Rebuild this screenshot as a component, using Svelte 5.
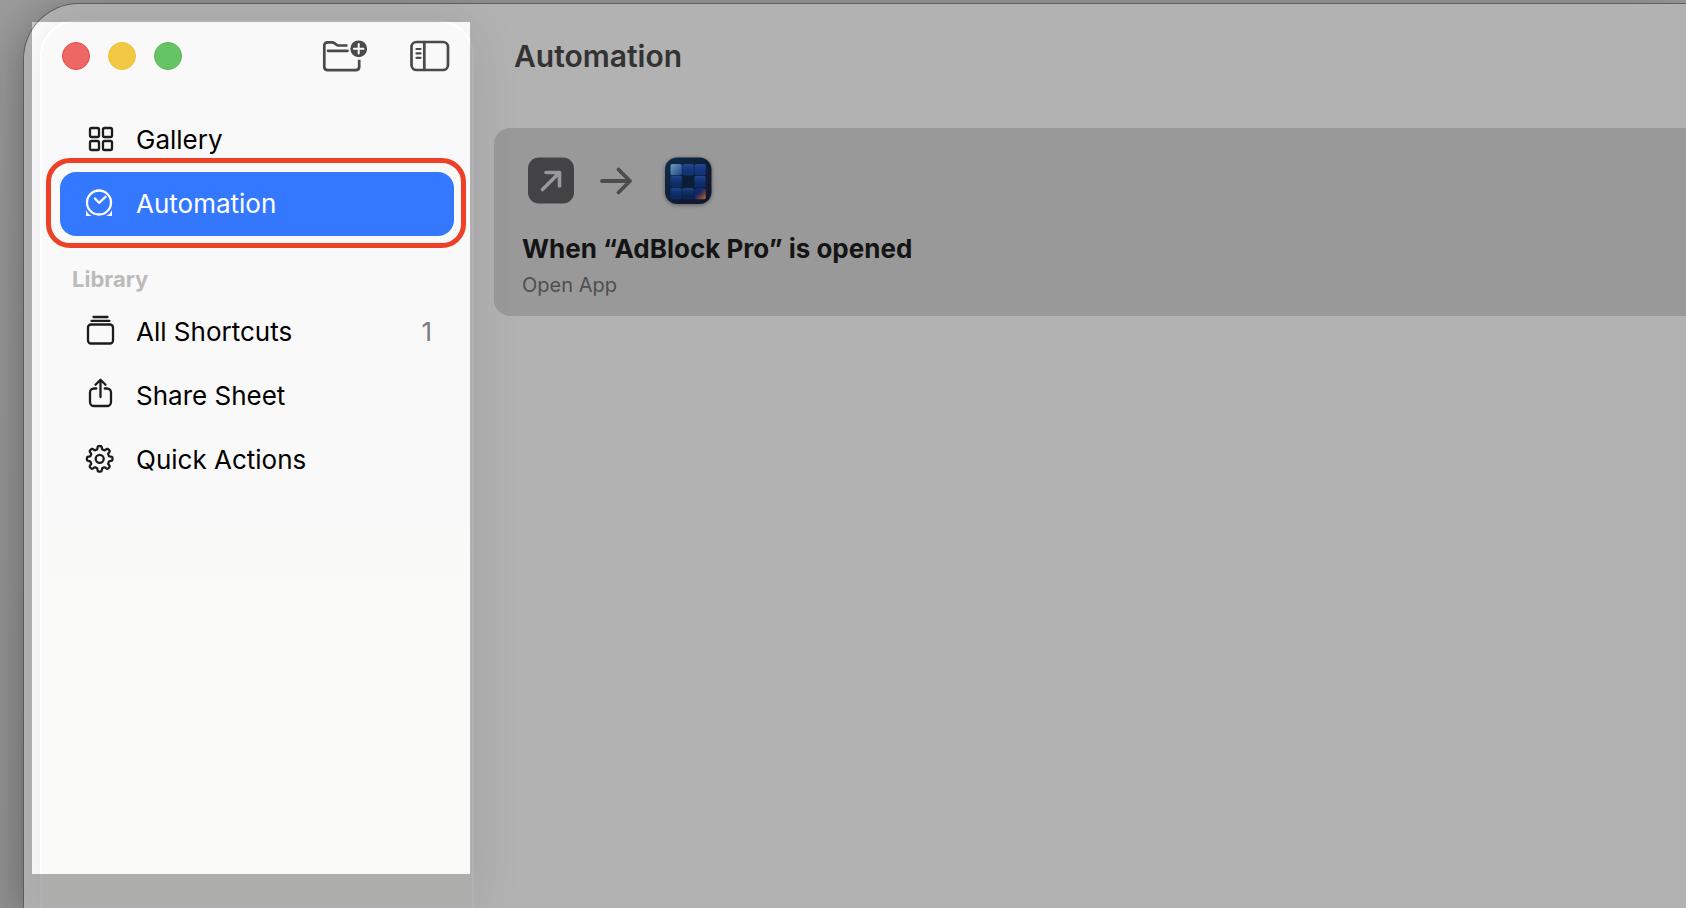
<script>
  const library = [
    { id: 'all', label: 'All Shortcuts', count: 1 },
    { id: 'share', label: 'Share Sheet' },
    { id: 'quick', label: 'Quick Actions' }
  ];

  // Outline of an eight-toothed cog with softened teeth.
  function cog(cx, cy) {
    const points = [];
    for (let i = 0; i < 160; i++) {
      const t = (i / 160) * Math.PI * 2;
      const r = 11.2 + 1.6 * Math.tanh(2.6 * Math.cos(8 * t));
      points.push(`${(cx + r * Math.sin(t)).toFixed(2)} ${(cy - r * Math.cos(t)).toFixed(2)}`);
    }
    return `M${points.join('L')}Z`;
  }

  const tiles = [
    'url(#tile-light)', '#1c48a4', '#1b45a6',
    '#123c86', '#11294f', '#123a8e',
    '#10377e', '#0d3268', 'url(#tile-warm)'
  ];
</script>

{#snippet icon(id)}
  <svg class="icon" viewBox="0 0 32 32" aria-hidden="true">
    {#if id === 'gallery'}
      <rect x="6" y="4" width="9" height="9" rx="1.6" />
      <rect x="19" y="4" width="9" height="9" rx="1.6" />
      <rect x="6" y="17" width="9" height="9" rx="1.6" />
      <rect x="19" y="17" width="9" height="9" rx="1.6" />
    {:else if id === 'automation'}
      <circle cx="15" cy="14.500" r="12" />
      <path d="M11 10.500l4 4.300 6.500-6" />
      <path class="solid" d="M2 22V28h6C5.200 26.800 3.200 25 2 22zM28 22V28h-6c2.800-1.200 4.800-3 6-6z" />
    {:else if id === 'all'}
      <rect x="4" y="8.500" width="25" height="19" rx="3" />
      <path d="M9.500 1h14M7.500 4.800h18" />
    {:else if id === 'share'}
      <path d="M12.300 8.500H10a4 4 0 0 0-4 4V22a4 4 0 0 0 4 4h13a4 4 0 0 0 4-4v-9.500a4 4 0 0 0-4-4h-2.300" />
      <path d="M16.500 17V0M11.500 4.700l5-5 5 5" />
    {:else}
      <path d={cog(15.7, 14.8)} />
      <circle cx="15.700" cy="14.800" r="4" />
    {/if}
  </svg>
{/snippet}

<div class="desktop">
  <div class="window">
    <aside class="sidebar">
      <div class="toolbar">
        <div class="lights">
          <button class="light close" aria-label="Close"></button>
          <button class="light minimise" aria-label="Minimise"></button>
          <button class="light zoom" aria-label="Zoom"></button>
        </div>
        <div class="tools">
          <button class="tool" aria-label="New Folder">
            <svg width="46" height="34" viewBox="0 0 46 34" fill="none" stroke="#4a4a4a" stroke-width="2.700" stroke-linecap="round" stroke-linejoin="round">
              <path d="M25.500 6.500H16.500c-1 0-1.600-.3-2.300-.9l-1.700-1.400c-.7-.6-1.400-.9-2.400-.9H5.700C3.500 3.300 2.300 4.500 2.300 6.800v21c0 2.300 1.200 3.400 3.400 3.400h28c2.300 0 3.500-1.200 3.500-3.400v-7" stroke-linecap="butt" />
              <path d="M6 11.800h19.500" />
              <circle cx="36.700" cy="9.800" r="8.400" fill="#4a4a4a" stroke="none" />
              <path d="M36.700 5v9.600M31.900 9.800h9.600" stroke="#f9f9f9" stroke-width="2" />
            </svg>
          </button>
          <button class="tool" aria-label="Hide Sidebar">
            <svg width="40" height="34" viewBox="0 0 40 34" fill="none" stroke="#4a4a4a" stroke-width="2.700" stroke-linecap="round">
              <rect x="1.500" y="3" width="36.500" height="28" rx="5" />
              <path d="M14.300 3v28" />
              <path d="M6.500 10h4M6.500 14.400h4M6.500 18.800h4" stroke-width="2.200" />
            </svg>
          </button>
        </div>
      </div>

      <nav>
        <button class="item">{@render icon('gallery')}<span>Gallery</span></button>
        <button class="item active" aria-current="page">{@render icon('automation')}<span>Automation</span></button>
        <h2>Library</h2>
        {#each library as entry}
          <button class="item">
            {@render icon(entry.id)}<span>{entry.label}</span>
            {#if entry.count}<span class="count">{entry.count}</span>{/if}
          </button>
        {/each}
      </nav>
    </aside>

    <main>
      <h1>Automation</h1>
      <button class="card">
        <span class="flow">
          <svg width="48" height="48" viewBox="0 0 48 48" aria-hidden="true">
            <rect y="1.500" width="46" height="46" rx="11" fill="#616164" />
            <path d="M14.500 33.500L31 17M18 16.500h13.500V30" fill="none" stroke="#dbdbdb" stroke-width="3.600" stroke-linecap="round" stroke-linejoin="round" />
          </svg>
          <svg width="34" height="48" viewBox="0 0 34 48" aria-hidden="true">
            <path d="M2 25h28M18.500 13.500L30 25 18.500 36.500" fill="none" stroke="#6e6e6e" stroke-width="3.800" stroke-linecap="round" stroke-linejoin="round" />
          </svg>
          <svg class="app" width="48" height="48" viewBox="0 0 48 48" aria-hidden="true">
            <defs>
              <linearGradient id="body" x1="0" y1="0" x2="1" y2="1">
                <stop offset="0" stop-color="#15406e" />
                <stop offset=".5" stop-color="#152c50" />
                <stop offset="1" stop-color="#1f1f3c" />
              </linearGradient>
              <linearGradient id="tile-light" x1="0" y1="0" x2="1" y2="1">
                <stop offset="0" stop-color="#a0e4ff" />
                <stop offset="1" stop-color="#2463cc" />
              </linearGradient>
              <linearGradient id="tile-warm" x1="0" y1="0" x2="1" y2="1">
                <stop offset=".4" stop-color="#1b3a96" />
                <stop offset=".65" stop-color="#8a5565" />
                <stop offset="1" stop-color="#f5a850" />
              </linearGradient>
              <linearGradient id="gloss" x1="0" y1="0" x2="0" y2="1">
                <stop offset="0" stop-color="#4c92ff" stop-opacity=".5" />
                <stop offset=".7" stop-color="#2058d8" stop-opacity=".15" />
              </linearGradient>
            </defs>
            <rect x="1" y="1.500" width="46.500" height="46.500" rx="12" fill="url(#body)" />
            {#each tiles as fill, i}
              <rect x={6.5 + (i % 3) * 12} y={8 + Math.floor(i / 3) * 12} width="11.300" height="11.300" rx="1.800" {fill} />
              {#if i !== 4 && i !== 0 && i !== 8}
                <rect x={6.5 + (i % 3) * 12} y={8 + Math.floor(i / 3) * 12} width="11.300" height="11.300" rx="1.800" fill="url(#gloss)" />
              {/if}
            {/each}
          </svg>
        </span>
        <span class="title">When “AdBlock Pro” is opened</span>
        <span class="subtitle">Open App</span>
      </button>
    </main>
  </div>
  <div class="spotlight"></div>
</div>

<style>
  :global(body) {
    margin: 0;
  }

  .desktop {
    position: relative;
    display: flex;
    box-sizing: border-box;
    min-height: 100vh;
    padding: 3px 0 0 23px;
    overflow: hidden;
    background: linear-gradient(#dedede, #d2d3d2);
    font-family: Inter, 'Liberation Sans', sans-serif;
  }

  button {
    margin: 0;
    padding: 0;
    border: 0;
    background: none;
    color: inherit;
    font: inherit;
    text-align: left;
  }

  .window {
    display: flex;
    flex: 1;
    min-width: 0;
    border: 1px solid #888;
    border-right: 0;
    border-bottom: 0;
    border-radius: 56px 0 0 0;
    background: #fff;
    box-shadow: 0 12px 50px rgba(0, 0, 0, 0.32);
  }

  .sidebar {
    flex: none;
    box-sizing: border-box;
    width: 434px;
    margin: 16px 0 0 16px;
    border: 2px solid #fff;
    border-bottom: 0;
    border-radius: 36px 36px 0 0;
    background: linear-gradient(#f9f9f9 50%, #fafaf8 75%);
    box-shadow: 0 0 50px rgba(0, 0, 0, 0.1);
  }

  .toolbar {
    display: flex;
    align-items: center;
    justify-content: space-between;
    height: 68px;
    padding: 0 22px 0 20px;
  }

  .lights {
    display: flex;
    gap: 18px;
  }

  .light {
    box-sizing: border-box;
    width: 28px;
    height: 28px;
    border: 1px solid;
    border-radius: 50%;
  }

  .close {
    border-color: #e84745;
    background: #ed6765;
  }

  .minimise {
    border-color: #eec033;
    background: #f3c944;
  }

  .zoom {
    border-color: #4eba4b;
    background: #65c466;
  }

  .tools {
    display: flex;
    gap: 42px;
  }

  .tool,
  .tool svg {
    display: block;
  }

  nav {
    display: flex;
    flex-direction: column;
    padding: 18px 18px 0;
  }

  .item {
    position: relative;
    display: flex;
    align-items: center;
    gap: 20px;
    height: 64px;
    padding: 0 22px 0 24px;
    border-radius: 16px;
    color: #000;
    font-size: 26px;
    line-height: 32px;
  }

  .icon {
    flex: none;
    width: 32px;
    height: 32px;
    overflow: visible;
    fill: none;
    stroke: #1c1c1c;
    stroke-width: 2.3;
    stroke-linecap: round;
    stroke-linejoin: round;
  }

  .active {
    background: #3478ff;
    color: #fff;
  }

  .active .icon {
    stroke: #fff;
  }

  .active .solid {
    fill: #fff;
    stroke: none;
  }

  .active::after {
    position: absolute;
    inset: -14px -12px -12px -14px;
    border: 5px solid #ec4127;
    border-radius: 24px;
    content: '';
  }

  .count {
    margin-left: auto;
    color: #7c7c7c;
  }

  h2 {
    margin: 0;
    padding: 27px 12px 5px;
    color: #bbb;
    font-size: 22px;
    font-weight: 700;
    line-height: 32px;
  }

  main {
    display: flex;
    flex: 1;
    flex-direction: column;
    min-width: 0;
    padding-left: 20px;
  }

  h1 {
    margin: 0;
    padding: 32px 20px 52px;
    color: #494949;
    font-size: 30px;
    font-weight: 600;
    line-height: 40px;
  }

  .card {
    display: flex;
    flex-direction: column;
    padding: 28px 28px 17px;
    border-radius: 16px 0 0 16px;
    background: rgba(0, 0, 0, 0.137);
  }

  .flow {
    display: flex;
    gap: 24px;
    padding: 0 6px 29px;
  }

  .app {
    margin-left: 6px;
    filter: drop-shadow(0 1px 2px rgba(0, 0, 0, 0.4));
  }

  .title {
    color: #1e1e1e;
    font-size: 26px;
    font-weight: 700;
    line-height: 32px;
  }

  .subtitle {
    margin-top: 6px;
    color: #727272;
    font-size: 20px;
    line-height: 28px;
  }

  /* Dims everything but the sidebar. */
  .spotlight {
    position: absolute;
    top: 22px;
    bottom: 34px;
    left: 32px;
    width: 438px;
    box-shadow: 0 0 0 9999px rgba(0, 0, 0, 0.3);
    pointer-events: none;
  }
</style>
